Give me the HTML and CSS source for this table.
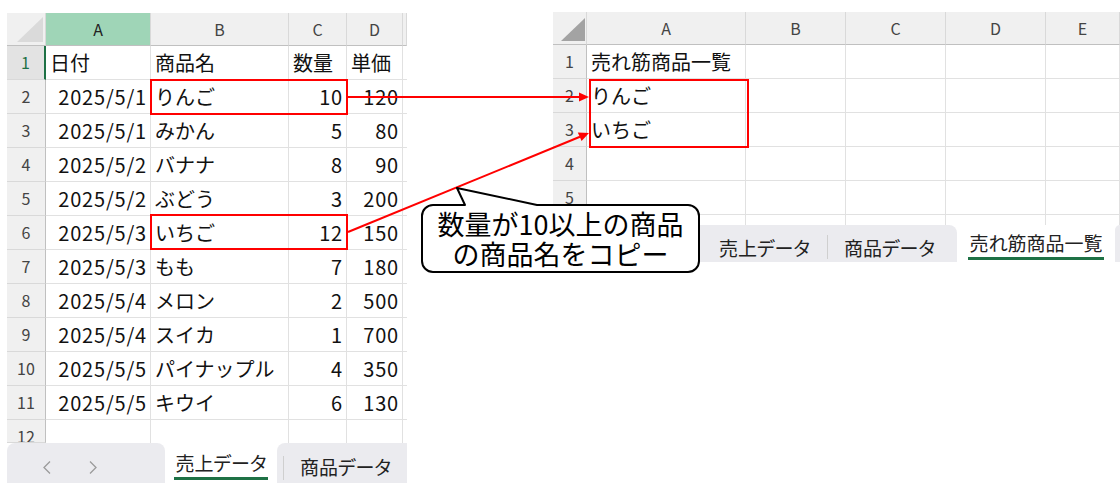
FILE: index.html
```html
<!DOCTYPE html>
<html lang="ja">
<head>
<meta charset="utf-8">
<title>売れ筋商品一覧</title>
<link rel="stylesheet" href="styles.css">
</head>
<body>
<div class="page">
  <div class="sheet sheet-left">
    <div class="corner"><span class="tri"></span></div><div class="ch sel-col">A</div><div class="ch">B</div><div class="ch">C</div><div class="ch">D</div><div class="ch"></div>
    <div class="rh sel-row">1</div><div class="c">日付</div><div class="c">商品名</div><div class="c">数量</div><div class="c">単価</div><div class="c"></div>
    <div class="rh">2</div><div class="c n">2025/5/1</div><div class="c">りんご</div><div class="c n">10</div><div class="c n">120</div><div class="c"></div>
    <div class="rh">3</div><div class="c n">2025/5/1</div><div class="c">みかん</div><div class="c n">5</div><div class="c n">80</div><div class="c"></div>
    <div class="rh">4</div><div class="c n">2025/5/2</div><div class="c">バナナ</div><div class="c n">8</div><div class="c n">90</div><div class="c"></div>
    <div class="rh">5</div><div class="c n">2025/5/2</div><div class="c">ぶどう</div><div class="c n">3</div><div class="c n">200</div><div class="c"></div>
    <div class="rh">6</div><div class="c n">2025/5/3</div><div class="c">いちご</div><div class="c n">12</div><div class="c n">150</div><div class="c"></div>
    <div class="rh">7</div><div class="c n">2025/5/3</div><div class="c">もも</div><div class="c n">7</div><div class="c n">180</div><div class="c"></div>
    <div class="rh">8</div><div class="c n">2025/5/4</div><div class="c">メロン</div><div class="c n">2</div><div class="c n">500</div><div class="c"></div>
    <div class="rh">9</div><div class="c n">2025/5/4</div><div class="c">スイカ</div><div class="c n">1</div><div class="c n">700</div><div class="c"></div>
    <div class="rh">10</div><div class="c n">2025/5/5</div><div class="c">パイナップル</div><div class="c n">4</div><div class="c n">350</div><div class="c"></div>
    <div class="rh">11</div><div class="c n">2025/5/5</div><div class="c">キウイ</div><div class="c n">6</div><div class="c n">130</div><div class="c"></div>
    <div class="rh cut">12</div><div class="c cut"></div><div class="c cut"></div><div class="c cut"></div><div class="c cut"></div><div class="c cut"></div>
    <div class="tabbar tabbar-left">
      <div class="seg seg-nav">
        <svg class="chev" width="10" height="15" viewBox="0 0 10 15"><polyline points="8,1.5 2,7.5 8,13.5"/></svg>
        <svg class="chev" width="10" height="15" viewBox="0 0 10 15"><polyline points="2,1.5 8,7.5 2,13.5"/></svg>
      </div>
      <div class="tab-active tab-active-left"><span class="tab-label">売上データ</span></div>
      <div class="seg seg-rest seg-rest-left">
        <span class="tab-sep"></span>
        <span class="tab tab-w-left">商品データ</span>
      </div>
    </div>
  </div>

  <div class="sheet sheet-right">
    <div class="corner corner-right"><span class="tri tri-dark"></span></div><div class="ch">A</div><div class="ch">B</div><div class="ch">C</div><div class="ch">D</div><div class="ch">E</div>
    <div class="rh">1</div><div class="c">売れ筋商品一覧</div><div class="c"></div><div class="c"></div><div class="c"></div><div class="c"></div>
    <div class="rh">2</div><div class="c">りんご</div><div class="c"></div><div class="c"></div><div class="c"></div><div class="c"></div>
    <div class="rh">3</div><div class="c">いちご</div><div class="c"></div><div class="c"></div><div class="c"></div><div class="c"></div>
    <div class="rh">4</div><div class="c"></div><div class="c"></div><div class="c"></div><div class="c"></div><div class="c"></div>
    <div class="rh">5</div><div class="c"></div><div class="c"></div><div class="c"></div><div class="c"></div><div class="c"></div>
    <div class="rh cut"></div><div class="c cut"></div><div class="c cut"></div><div class="c cut"></div><div class="c cut"></div><div class="c cut"></div>
    <div class="tabbar tabbar-right">
      <div class="seg seg-main">
        <div class="nav-space"></div>
        <span class="tab tab-w1">売上データ</span>
        <span class="tab-sep"></span>
        <span class="tab tab-w2">商品データ</span>
      </div>
      <div class="tab-active tab-active-right"><span class="tab-label">売れ筋商品一覧</span></div>
      <div class="seg seg-rest seg-tail"></div>
    </div>
  </div>
</div>

<svg class="overlay" width="1120" height="488" viewBox="0 0 1120 488">
  <rect class="hl" x="151" y="80" width="196" height="34"/>
  <rect class="hl" x="151" y="215" width="196" height="34"/>
  <rect class="hl" x="590" y="80" width="158" height="67"/>
  <line class="arrow" x1="348" y1="97" x2="580" y2="97"/>
  <polygon class="head" points="589,97 579,92.5 579,101.5"/>
  <line class="arrow" x1="348" y1="232" x2="580" y2="136.8"/>
  <polygon class="head" points="589,133 581.6,140.9 577.8,132.6"/>
</svg>

<div class="callout">
  <svg class="callout-shape" width="279" height="87" viewBox="0 0 279 87">
    <path d="M12,18 H44 L36,1 L116,18 H267 A11,11 0 0 1 278,29 V74 A11,11 0 0 1 267,85 H12 A11,11 0 0 1 1,74 V29 A11,11 0 0 1 12,18 Z"/>
  </svg>
  <p class="callout-text">数量が10以上の商品<br>の商品名をコピー</p>
</div>
</body>
</html>
```

FILE: styles.css
```css
* {
  box-sizing: border-box;
  margin: 0;
  padding: 0;
}

body {
  width: 1120px;
  height: 488px;
  background: #ffffff;
  font-family: "Noto Sans CJK JP", "Noto Sans", sans-serif;
  color: #111111;
  position: relative;
  overflow: hidden;
}

.page {
  display: flex;
  align-items: flex-start;
  gap: 146px;
  padding: 12px 0 0 7px;
}

.sheet {
  display: grid;
  overflow: hidden;
}

.sheet-left {
  width: 400px;
  margin-top: 1px;
  grid-template-columns: 39px 105px 138px 58px 56px 4px;
  grid-template-rows: 33px repeat(11, 34px) 23px 40px;
}

.sheet-right {
  width: 567px;
  grid-template-columns: 34px 159px 100px 100px 100px 74px;
  grid-template-rows: 33px repeat(5, 34px) 10px 37px;
}

.c {
  border-right: 1px solid #e1e1e1;
  border-bottom: 1px solid #e1e1e1;
  font-size: 20px;
  line-height: 33px;
  padding: 0 4px;
  white-space: nowrap;
  overflow: hidden;
  color: #111111;
}

.n {
  text-align: right;
  letter-spacing: 0.8px;
  padding-right: 3px;
}

.cut {
  border-bottom: none;
}

.ch {
  background: #f0f0f0;
  border-right: 1px solid #d9d9d9;
  border-bottom: 1px solid #c0c0c0;
  font-size: 16px;
  line-height: 32px;
  color: #444444;
  text-align: center;
}

.sel-col {
  background: #9fd5b7;
  color: #222222;
}

.rh {
  background: #f0f0f0;
  border-right: 1px solid #c0c0c0;
  border-bottom: 1px solid #d9d9d9;
  font-size: 16px;
  line-height: 33px;
  color: #444444;
  text-align: center;
  overflow: hidden;
}

.sel-row {
  background: #e3e3e3;
  color: #1e7145;
  border-right: 2px solid #1e7145;
}

.corner {
  background: #f0f0f0;
  border-right: 1px solid #d9d9d9;
  border-bottom: 1px solid #c0c0c0;
  display: flex;
  justify-content: flex-end;
  align-items: flex-end;
  padding: 0 2px 3px 0;
}

.tri {
  display: block;
  width: 26px;
  height: 25px;
  background: #dadada;
  clip-path: polygon(100% 0, 100% 100%, 0 100%);
}

.corner-right {
  padding: 0 1px 3px 0;
}

.tri-dark {
  width: 24px;
  height: 23px;
  background: #a3a3a3;
}

/* sheet tabs */
.tabbar {
  grid-column: 1 / -1;
  display: flex;
  background: #ffffff;
  overflow: hidden;
}

.seg {
  background: #ebebef;
  display: flex;
  align-items: center;
  padding-top: 8px;
}

.seg-nav {
  width: 158px;
  border-radius: 8px 8px 0 0;
  padding-left: 35px;
  gap: 36px;
}

.chev polyline {
  fill: none;
  stroke: #9b9b9b;
  stroke-width: 1.3;
}

.tab-active {
  background: #ffffff;
  display: flex;
  justify-content: center;
  align-items: center;
  padding-top: 3px;
}

.tab-active-left {
  width: 112px;
}

.tab-active-right {
  width: 158px;
  align-items: flex-start;
  padding-top: 4px;
}

.tab-label {
  font-size: 19px;
  line-height: 28px;
  color: #222222;
  border-bottom: 3px solid #1e7145;
  font-feature-settings: "palt";
  padding: 0 1px;
}

.seg-rest {
  flex: 1;
  border-radius: 8px 0 0 0;
}

.seg-rest-left {
  padding-left: 6px;
}

.tab-sep {
  width: 1px;
  height: 24px;
  background: #cfcfcf;
  align-self: flex-end;
  margin-bottom: 3px;
}

.tab {
  font-size: 19px;
  line-height: 28px;
  color: #222222;
  text-align: center;
  font-feature-settings: "palt";
}

.tab-w-left {
  width: 123px;
}

.seg-main {
  width: 404px;
  border-radius: 8px 8px 0 0;
}

.nav-space {
  width: 149px;
}

.tab-w1 {
  width: 125px;
}

.tab-w2 {
  width: 123px;
}

.seg-tail {
  flex: 1;
}

/* overlay annotations */
.overlay {
  position: absolute;
  left: 0;
  top: 0;
  pointer-events: none;
}

.hl {
  fill: none;
  stroke: #ff0000;
  stroke-width: 2;
}

.arrow {
  stroke: #ff0000;
  stroke-width: 2;
}

.head {
  fill: #ff0000;
}

.callout {
  position: absolute;
  left: 421px;
  top: 187px;
  width: 279px;
  height: 87px;
}

.callout-shape {
  position: absolute;
  left: 0;
  top: 0;
}

.callout-shape path {
  fill: #ffffff;
  stroke: #000000;
  stroke-width: 2;
  stroke-linejoin: round;
}

.callout-text {
  position: relative;
  padding-top: 22px;
  font-size: 27px;
  line-height: 30px;
  text-align: center;
  color: #000000;
}
```
